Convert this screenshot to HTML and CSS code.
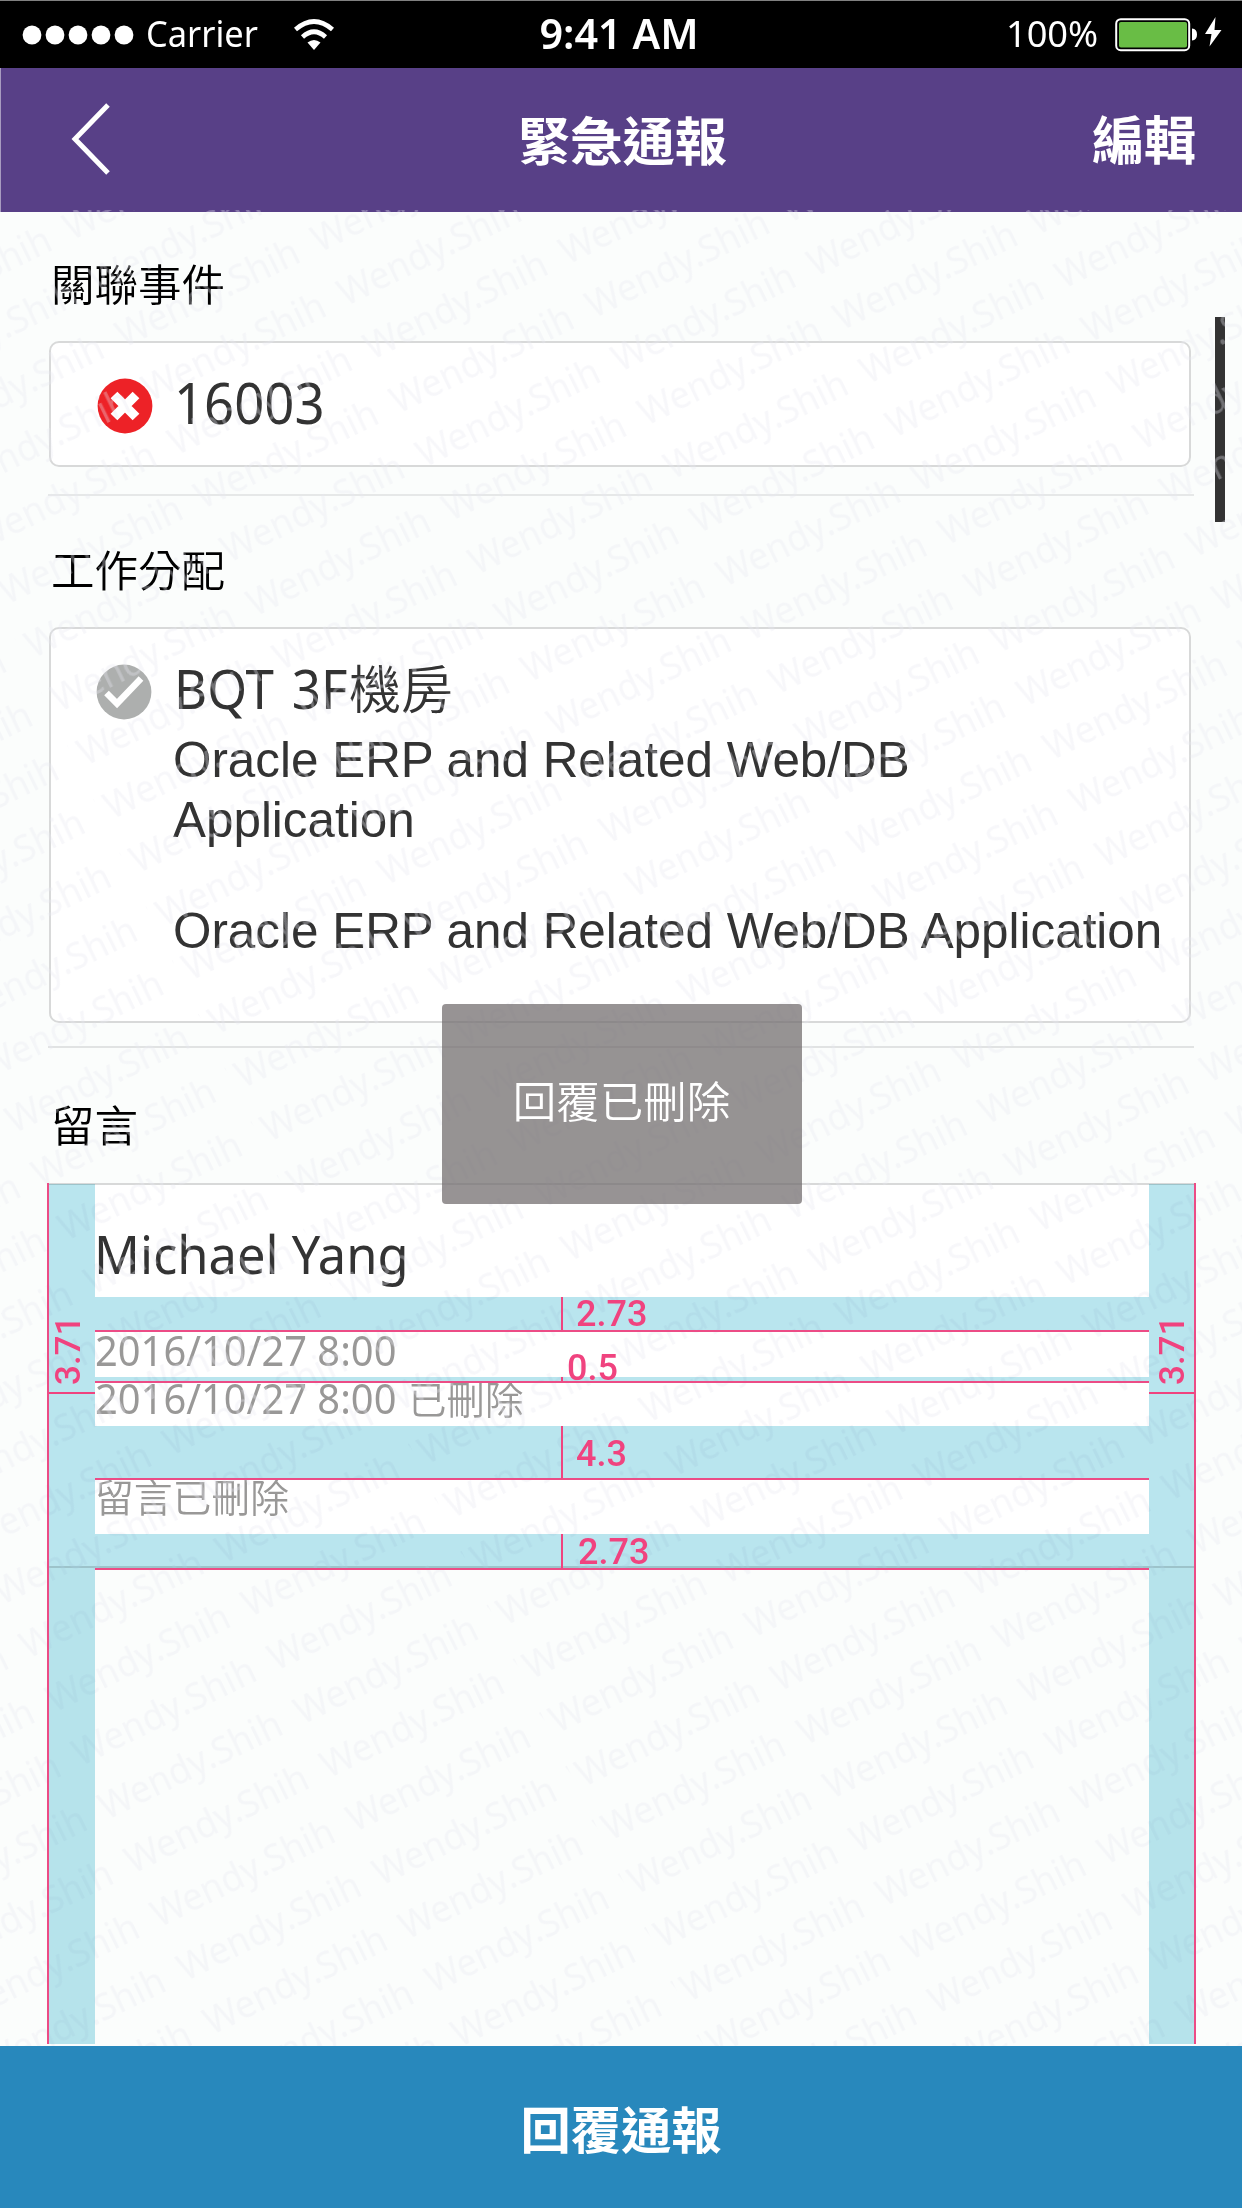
FILE: index.html
```html
<!DOCTYPE html>
<html lang="zh-Hant">
<head>
<meta charset="utf-8">
<title>緊急通報</title>
<link rel="stylesheet" href="styles.css">
</head>
<body>
<div class="screen">
  <header class="status">
    <div class="status-left">
      <svg class="signal" viewBox="0 0 112 20"><g fill="#fff"><circle cx="10" cy="10" r="9.4"/><circle cx="33" cy="10" r="9.4"/><circle cx="56" cy="10" r="9.4"/><circle cx="79" cy="10" r="9.4"/><circle cx="102" cy="10" r="9.4"/></g></svg>
      <span class="carrier">Carrier</span>
      <svg class="wifi" viewBox="0 0 42 32"><g fill="none" stroke="#fff" stroke-width="4.6"><path d="M2.5 10.5Q21-5.500 39.500 10.500"/><path d="M9.500 18Q21 7.500 32.500 18"/></g><path d="M14.500 23.500Q21 18.500 27.500 23.500L21 31Z" fill="#fff"/></svg>
    </div>
    <span class="clock">9:41 AM</span>
    <div class="status-right">
      <span class="percent">100%</span>
      <svg class="battery" viewBox="0 0 108 36"><rect x="1.200" y="2.200" width="73" height="31" rx="4.500" fill="none" stroke="#fff" stroke-width="2"/><rect x="4" y="5" width="68" height="25.500" rx="2" fill="#69bd45"/><path d="M77 11.500Q82 12 82 17.500T77 23.500Z" fill="#fff"/><path d="M100.500 0L90 17H96.500L94.500 29.500L106.500 13H99.500Z" fill="#fff"/></svg>
    </div>
  </header>
  <nav class="nav">
    <svg class="back" viewBox="0 0 40 72"><path d="M37 2L4 36L37 70" fill="none" stroke="#fff" stroke-width="5"/></svg>
    <h1 class="nav-title">緊急通報</h1>
    <span class="nav-edit">編輯</span>
  </nav>

  <main class="content">
    <section class="section event">
      <h2 class="label">關聯事件</h2>
      <div class="card card-event">
        <svg class="icon" viewBox="0 0 56 56"><circle cx="28" cy="28" r="27.400" fill="#ed2227"/><path d="M17 17L39 39M39 17L17 39" stroke="#fff" stroke-width="9.500"/></svg>
        <span class="event-id">16003</span>
      </div>
    </section>
    <section class="section jobs">
      <h2 class="label">工作分配</h2>
      <div class="card card-jobs">
        <svg class="icon" viewBox="0 0 56 56"><circle cx="28" cy="28" r="27.400" fill="#adafae"/><path d="M10.500 29L21 39.500L45 14.500" fill="none" stroke="#fff" stroke-width="6.500"/></svg>
        <div class="job-body">
          <div class="job-title"><span class="latin">BQT 3F</span><span class="han">機房</span></div>
          <p class="job-text">Oracle ERP and Related Web/DB<br>Application</p>
          <p class="job-text second">Oracle ERP and Related Web/DB Application</p>
        </div>
      </div>
    </section>
    <section class="section messages">
      <h2 class="label">留言</h2>
      <div class="thread">
        <div class="rail rail-left"><span class="rail-value">3.71</span><i class="rail-tick"></i></div>
        <div class="replies">
          <div class="author"><span>Michael Yang</span></div>
          <div class="gap gap-a"><b>2.73</b></div>
          <div class="stamp first"><span>2016/10/27 8:00</span></div>
          <div class="gap gap-b"><b>0.5</b></div>
          <div class="stamp second"><span>2016/10/27 8:00</span><em>已刪除</em></div>
          <div class="gap gap-c"><b>4.3</b></div>
          <div class="removed">留言已刪除</div>
          <div class="gap gap-d"><b>2.73</b></div>
        </div>
        <div class="rail rail-right"><span class="rail-value">3.71</span><i class="rail-tick"></i></div>
      </div>
    </section>
  </main>

  <svg class="watermark" viewBox="0 210 1242 1836">
    <defs>
      <pattern id="markRight" patternUnits="userSpaceOnUse" x="-268.500" y="801" width="217.600" height="59.800" patternTransform="rotate(-26)">
        <text class="mark" x="9.500" y="44.500" textLength="199" lengthAdjust="spacingAndGlyphs">Wendy.Shih</text>
      </pattern>
      <pattern id="markLeft" patternUnits="userSpaceOnUse" x="-494.100" y="801" width="217.600" height="59.800" patternTransform="rotate(-26)">
        <text class="mark" x="9.500" y="44.500" textLength="199" lengthAdjust="spacingAndGlyphs">Wendy.Shih</text>
      </pattern>
    </defs>
    <path d="M0 210H1242V2046H704L-189 223Z" fill="url(#markRight)"/>
    <path d="M0 608L704 2046H0Z" fill="url(#markLeft)"/>
  </svg>
  <div class="scrollbar"></div>
  <div class="toast">回覆已刪除</div>
  <footer class="reply">回覆通報</footer>
</div>
</body>
</html>
```
FILE: styles.css
```css
* { box-sizing: border-box; }
body { margin: 0; background: #fbfdfc; }
h1, h2, p { margin: 0; font-weight: inherit; }
svg { display: block; flex: none; }

.screen {
  position: relative;
  width: 1242px;
  height: 2208px;
  overflow: hidden;
  display: flex;
  flex-direction: column;
  background: #fbfdfc;
  color: #333;
  font-family: "Noto Sans", "Noto Sans CJK TC", sans-serif;
}

/* status bar */
.status {
  height: 68px;
  flex: none;
  display: grid;
  grid-template-columns: 1fr auto 1fr;
  align-items: center;
  background: #000;
  border-top: 1px solid #808080;
  color: #fff;
}
.status-left, .status-right { display: flex; align-items: center; }
.status-left { padding-left: 22px; }
.signal { width: 112px; height: 20px; }
.carrier {
  width: 146px;
  margin-left: 12px;
  padding-bottom: 3px;
  font-size: 37px;
  line-height: 50px;
  transform: scaleX(.93);
  transform-origin: 0 50%;
}
.wifi { width: 42px; height: 32px; margin-left: 1px; }
.clock { padding: 0 4px 3px 0; font: 600 41.300px/50px "Noto Sans", sans-serif; }
.status-right { justify-content: flex-end; padding-right: 19px; }
.percent {
  padding-bottom: 3px;
  font-size: 37px;
  line-height: 50px;
  transform: scaleX(.98);
  transform-origin: 100% 50%;
}
.battery { width: 108px; height: 36px; margin-left: 17px; }

/* title bar */
.nav {
  height: 144px;
  flex: none;
  display: grid;
  grid-template-columns: 1fr auto 1fr;
  align-items: center;
  padding: 0 46px 4px;
  background: #584087;
  box-shadow: inset 1px 0 #a89cc0;
  color: #fff;
  font: 700 52px/70px "Noto Sans CJK TC", sans-serif;
}
.back { width: 40px; height: 72px; margin: 2px 0 0 25px; }
.nav-title { margin-left: 3px; font-size: 52.300px; font-weight: 700; }
.nav-edit { justify-self: end; }

/* content */
.content { height: 1834px; flex: none; padding: 0 48px; }
.label {
  padding-left: 3px;
  color: #000;
  font: 350 43.500px/60px "Noto Sans CJK TC", sans-serif;
}
.section.event { height: 284px; padding-top: 41px; border-bottom: 2px solid #e6e8e8; }
.section.jobs { height: 552px; padding-top: 43px; border-bottom: 2px solid #e1e3e3; }
.section.messages { padding-top: 46px; }
.card {
  display: flex;
  margin: 0 3px 0 1px;
  border: 2px solid #d8d9d9;
  border-radius: 10px;
  background: #fff;
}
.card-event { height: 126px; margin-top: 28px; padding: 3px 46px 0; align-items: center; }
.icon { width: 56px; height: 56px; }
.event-id {
  margin-left: 21px;
  padding-bottom: 8px;
  font-size: 56px;
  transform: scaleX(.94);
  transform-origin: 0 50%;
}
.card-jobs { height: 396px; margin-top: 28px; padding: 35px 0 0 45px; }
.job-body { margin-left: 21px; }
.job-title { display: flex; height: 60px; align-items: center; margin: -6px 0 3px 1px; }
.job-title .latin {
  width: 175px;
  font-size: 54px;
  word-spacing: 5px;
  white-space: nowrap;
  transform: scaleX(.945);
  transform-origin: 0 50%;
}
.job-title .han { padding-bottom: 2px; font: 350 52px/60px "Noto Sans CJK TC", sans-serif; }
.job-text {
  margin-top: 12px;
  font: 49.400px/60px "Liberation Sans", Arial, sans-serif;
  white-space: nowrap;
}
.job-text.second { margin-top: 51px; }

/* message thread with spacing marks */
.thread {
  height: 861px;
  margin: 29px -2px 0 -1px;
  display: grid;
  grid-template-columns: 48px 1fr 47px;
  background: linear-gradient(#d8d9d9 0 2px, #fff 2px 383px, #d8d9d9 383px 385px, transparent 385px);
}
.rail, .gap { position: relative; }
.rail::before, .gap::before {
  content: "";
  position: absolute;
  inset: 0;
  z-index: 2;
  background: #b9e5ee;
  mix-blend-mode: multiply;
}
.rail::before { top: 1px; }
.rail::after, .gap::after {
  content: "";
  position: absolute;
  z-index: 3;
  background: #ec4c86;
}
.rail::after { top: 0; bottom: 0; width: 2px; }
.rail-left::after { left: 0; }
.rail-right::after { right: 0; }
.rail-tick {
  position: absolute;
  z-index: 3;
  top: 209px;
  left: 0;
  right: 0;
  height: 2px;
  background: #f0437f;
}
.rail-value {
  position: absolute;
  z-index: 3;
  top: 134px;
  left: 2px;
  height: 68px;
  writing-mode: vertical-rl;
  transform: rotate(180deg);
  color: #f0437f;
  font: 500 35px/40px Roboto, sans-serif;
}
.rail-right .rail-value { left: 4px; }
.gap::after { left: 0; right: 0; bottom: -2px; height: 2px; }
.gap { margin-bottom: 2px; }
.gap b {
  position: absolute;
  z-index: 3;
  left: 466px;
  top: 0;
  bottom: 0;
  display: flex;
  align-items: center;
  padding-left: 13px;
  border-left: 2px solid #f0437f;
  color: #f0437f;
  font: 500 36px/1 Roboto, sans-serif;
}
.gap-a { height: 33px; }
.gap-b { height: 4px; }
.gap-b b { align-items: flex-end; padding: 0 0 0 4px; line-height: 26px; }
.gap-c { height: 52px; }
.gap-c b { padding-top: 3px; }
.gap-d { height: 34px; }
.gap-d b { padding: 2px 0 0 15px; }
.author {
  height: 114px;
  padding-top: 34px;
  font-size: 53px;
  line-height: 74px;
  white-space: nowrap;
}
.author span, .stamp span {
  display: inline-block;
  transform: scaleX(.955);
  transform-origin: 0 50%;
}
.author span { margin-left: -1px; }
.stamp {
  display: flex;
  align-items: flex-start;
  color: #999897;
  font-size: 41px;
  line-height: 36px;
  white-space: nowrap;
}
.stamp span { width: 313px; transform: scaleX(.972); }
.stamp em { margin-top: -5px; font: 350 38.500px/38px "Noto Sans CJK TC", sans-serif; }
.stamp.first { height: 45px; }
.stamp.second { height: 43px; }
.stamp.second span { margin-top: -3px; }
.removed {
  height: 54px;
  color: #999897;
  font: 350 38.800px/31px "Noto Sans CJK TC", sans-serif;
}

/* layers over the content */
.watermark {
  position: absolute;
  z-index: 1;
  top: 210px;
  left: 0;
  width: 1242px;
  height: 1836px;
  pointer-events: none;
}
.mark { font: 39px "Noto Sans", sans-serif; fill: rgb(232, 231, 240); fill-opacity: .34; }
.scrollbar {
  position: absolute;
  top: 317px;
  right: 17px;
  width: 10px;
  height: 205px;
  background: #333;
}
.toast {
  position: absolute;
  z-index: 4;
  top: 1004px;
  left: 442px;
  width: 360px;
  height: 200px;
  padding: 0 1px 8px 0;
  border-radius: 4px;
  display: flex;
  align-items: center;
  justify-content: center;
  background: rgba(111, 106, 107, .72);
  color: #fff;
  font: 350 43.500px/60px "Noto Sans CJK TC", sans-serif;
}

.reply {
  flex: 1;
  display: flex;
  align-items: center;
  justify-content: center;
  background: #2888bc;
  color: #fff;
  font: 700 50.300px/70px "Noto Sans CJK TC", sans-serif;
}
```
